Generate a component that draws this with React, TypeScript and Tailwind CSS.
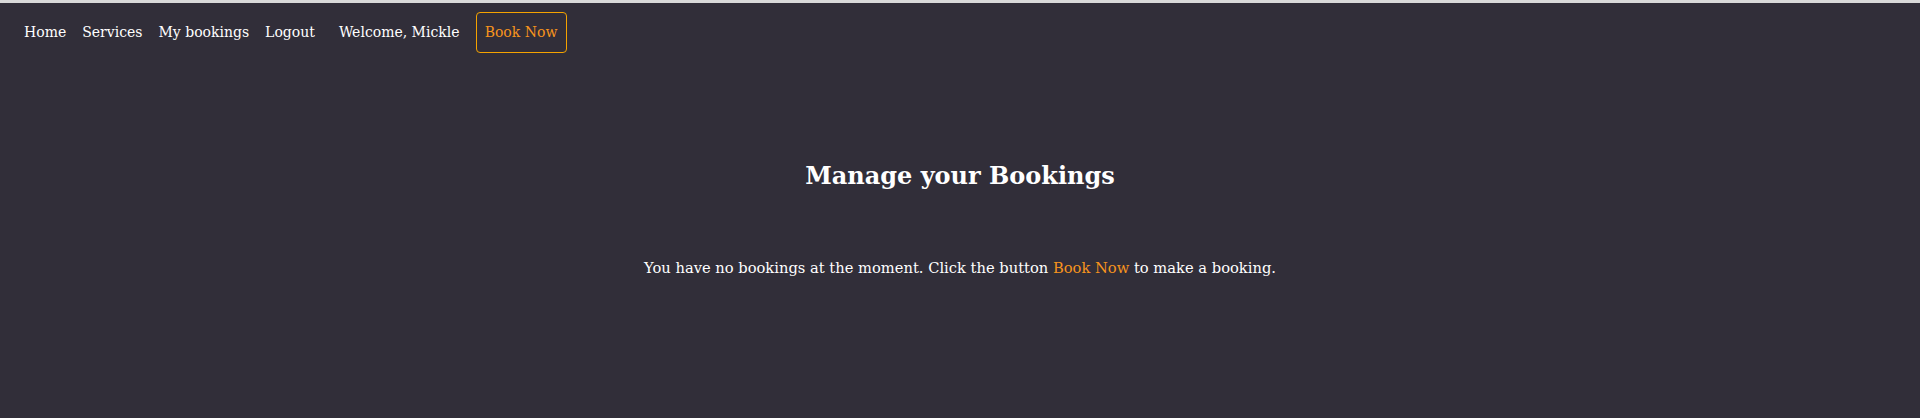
export default function App() {
  return (
    <div className="min-h-[418px] bg-[#312e39] font-['DejaVu_Serif',serif] text-white">
      <div className="h-[3px] bg-[#d9d9d9]" />
      <nav className="flex items-center px-6 pt-[9px] text-[14px]">
        <ul className="flex items-center gap-4">
          <li>Home</li>
          <li>Services</li>
          <li>My bookings</li>
          <li>Logout</li>
        </ul>
        <span className="ml-6">Welcome, Mickle</span>
        <button className="ml-4 h-[41px] w-[91px] rounded border border-[#f5a300] text-[14px] text-[#f7941d]">
          Book Now
        </button>
      </nav>
      <main className="flex flex-col items-center">
        <h1 className="mt-[105px] text-[24px] font-bold">Manage your Bookings</h1>
        <p className="mt-[63px] text-[14.7px]">
          You have no bookings at the moment. Click the button{' '}
          <span className="text-[#f7941d]">Book Now</span> to make a booking.
        </p>
      </main>
    </div>
  );
}
